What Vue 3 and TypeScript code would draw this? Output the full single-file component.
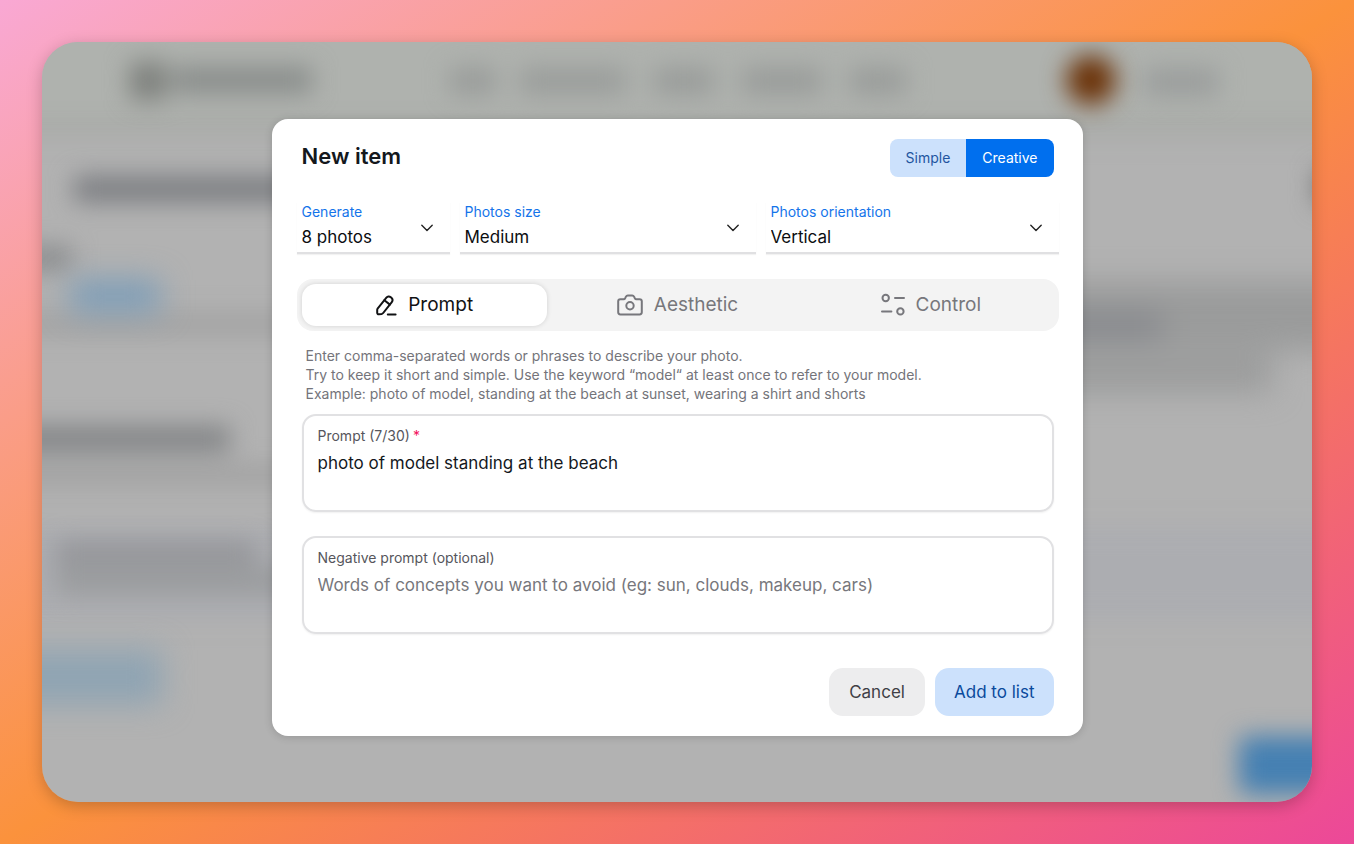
<script setup lang="ts">
import { ref } from 'vue'

interface SelectField {
  id: string
  label: string
  value: string
  options: string[]
}

const modes = ['Simple', 'Creative']
const mode = ref('Creative')

const fields = ref<SelectField[]>([
  { id: 'generate', label: 'Generate', value: '8 photos', options: ['4 photos', '8 photos', '16 photos'] },
  { id: 'size', label: 'Photos size', value: 'Medium', options: ['Small', 'Medium', 'Large'] },
  { id: 'orientation', label: 'Photos orientation', value: 'Vertical', options: ['Vertical', 'Horizontal', 'Square'] },
])

const tabs = ['Prompt', 'Aesthetic', 'Control']
const activeTab = ref('Prompt')

const prompt = ref('photo of model standing at the beach')
const negativePrompt = ref('')
</script>

<template>
  <div class="page">
    <div class="window">
      <svg class="backdrop" viewBox="0 0 1270 760" preserveAspectRatio="none" aria-hidden="true">
        <defs>
          <filter id="soft" filterUnits="userSpaceOnUse" x="-100" y="-100" width="1470" height="960" color-interpolation-filters="sRGB"><feGaussianBlur stdDeviation="12" /></filter>
          <filter id="softer" filterUnits="userSpaceOnUse" x="-100" y="-100" width="1470" height="960" color-interpolation-filters="sRGB"><feGaussianBlur stdDeviation="15" /></filter>
        </defs>
        <rect width="1270" height="760" fill="#b2b2b2" />
        <g filter="url(#soft)">
          <rect x="-60" y="-60" width="1390" height="152" fill="#afb2ae" />
          <rect x="-60" y="76" width="1390" height="18" fill="#a8aaa7" />
          <rect x="-60" y="485" width="1390" height="92" fill="#acadb1" />
        </g>
        <g filter="url(#soft)">
          <rect x="88" y="20" width="36" height="38" fill="#7d807c" />
          <rect x="130" y="25" width="140" height="26" fill="#888c8a" />
          <rect x="408" y="26" width="46" height="26" fill="#989b99" />
          <rect x="478" y="26" width="106" height="26" fill="#999c9a" />
          <rect x="612" y="26" width="60" height="26" fill="#989b99" />
          <rect x="700" y="26" width="80" height="26" fill="#989b99" />
          <rect x="808" y="26" width="56" height="26" fill="#989b99" />
          <rect x="1102" y="26" width="74" height="28" fill="#9a9d9c" />
          <rect x="32" y="134" width="240" height="26" fill="#7b7d81" />
          <rect x="-40" y="204" width="70" height="24" fill="#8a8c8e" />
          <rect x="-40" y="272" width="310" height="20" fill="#a1a1a1" />
          <rect x="-40" y="384" width="228" height="26" fill="#828486" />
          <rect x="-40" y="424" width="310" height="18" fill="#9f9f9f" />
          <rect x="14" y="500" width="200" height="22" fill="#929397" />
          <rect x="14" y="526" width="256" height="26" fill="#999b9d" />
        </g>
        <g filter="url(#softer)">
          <rect x="28" y="238" width="90" height="32" fill="#7c9db8" />
          <rect x="1000" y="240" width="330" height="68" fill="#9a9b9b" />
          <rect x="1000" y="272" width="120" height="24" fill="#84868b" />
          <rect x="1000" y="312" width="230" height="38" fill="#9b9c9c" />
          <rect x="-60" y="608" width="180" height="54" fill="#8fa4b3" />
        </g>
        <g filter="url(#soft)">
          <circle cx="1049" cy="38" r="25" fill="#6b3208" />
          <rect x="1197" y="694" width="140" height="58" rx="8" fill="#4580b2" />
          <rect x="1274" y="128" width="20" height="34" fill="#707070" />
        </g>
      </svg>

      <form class="modal" role="dialog" aria-labelledby="dialog-title" @submit.prevent>
        <header class="head">
          <h1 id="dialog-title">New item</h1>
          <div class="modes" role="group" aria-label="Mode">
            <button
              v-for="name in modes"
              :key="name"
              type="button"
              :class="{ on: mode === name }"
              :aria-pressed="mode === name"
              @click="mode = name"
            >{{ name }}</button>
          </div>
        </header>

        <div class="fields">
          <div v-for="field in fields" :key="field.id" class="field">
            <label :for="field.id">{{ field.label }}</label>
            <select :id="field.id" v-model="field.value">
              <option v-for="option in field.options" :key="option">{{ option }}</option>
            </select>
            <svg class="chevron" viewBox="0 0 14 14" aria-hidden="true"><path d="M1.8 4.3 7 9.5l5.2-5.2" /></svg>
          </div>
        </div>

        <div class="tabs" role="tablist">
          <button
            v-for="tab in tabs"
            :key="tab"
            type="button"
            role="tab"
            :aria-selected="activeTab === tab"
            :class="{ active: activeTab === tab }"
            @click="activeTab = tab"
          >
            <svg v-if="tab === 'Prompt'" class="pencil" viewBox="0 0 22 24" aria-hidden="true">
              <path d="M2.6 15.6 11.4 4.7c1.2-1.5 2.9-1.7 4.4-.5l.6.5c1.5 1.2 1.6 2.9.4 4.4L8.2 20c-.4.5-.9.8-1.5.9l-2.8.4c-1 .1-1.7-.5-1.7-1.5V17c0-.6.1-1 .4-1.4Z" />
              <path d="m9.4 7.2 5.5 4.4M12.8 21.5h7.8" />
            </svg>
            <svg v-else-if="tab === 'Aesthetic'" class="camera" viewBox="0 0 26 22" aria-hidden="true">
              <path d="M3.4 5.2h3.2c.8 0 1.2-.3 1.6-1l.6-1.3c.4-.8 1-1.4 2-1.4h4.4c1 0 1.6.6 2 1.4l.6 1.3c.4.7.8 1 1.6 1h3.2c1.3 0 2.2.9 2.2 2.1v11c0 1.3-.9 2.1-2.2 2.1H3.4c-1.3 0-2.2-.8-2.2-2.1v-11c0-1.2.9-2.1 2.2-2.1Z" />
              <circle cx="13" cy="11.8" r="3.7" />
            </svg>
            <svg v-else class="sliders" viewBox="0 0 24 24" aria-hidden="true">
              <circle cx="4.7" cy="5" r="3.2" />
              <path d="M14 5h9M1 18.4h9.4" />
              <circle cx="19.4" cy="18.4" r="3.2" />
            </svg>
            <span>{{ tab }}</span>
          </button>
        </div>

        <p class="hint">
          Enter comma-separated words or phrases to describe your photo.<br />
          Try to keep it short and simple. Use the keyword “model“ at least once to refer to your model.<br />
          Example: photo of model, standing at the beach at sunset, wearing a shirt and shorts
        </p>

        <div class="box">
          <label for="prompt">Prompt (7/30)<span class="star">*</span></label>
          <textarea id="prompt" v-model="prompt" spellcheck="false" required></textarea>
        </div>
        <div class="box">
          <label for="negative">Negative prompt (optional)</label>
          <textarea
            id="negative"
            v-model="negativePrompt"
            placeholder="Words of concepts you want to avoid (eg: sun, clouds, makeup, cars)"
          ></textarea>
        </div>

        <footer class="actions">
          <button type="button" class="cancel">Cancel</button>
          <button type="submit" class="add">Add to list</button>
        </footer>
      </form>
    </div>
  </div>
</template>

<style>
body {
  margin: 0;
}
</style>

<style scoped>
* {
  box-sizing: border-box;
}

.page {
  min-height: 100vh;
  padding: 42px;
  display: flex;
  font-family: Inter, "Liberation Sans", sans-serif;
  background: linear-gradient(to bottom right, #f9a8d4, #fb923c, #ec4899);
}

.window {
  position: relative;
  flex: 1;
  display: flex;
  justify-content: center;
  align-items: center;
  padding: 30px 24px 20px;
  border-radius: 36px;
  overflow: hidden;
  box-shadow: 0 4px 16px rgba(0, 0, 0, 0.22);
}

.backdrop {
  position: absolute;
  inset: 0;
  width: 100%;
  height: 100%;
}

.modal {
  position: relative;
  width: 100%;
  max-width: 811px;
  padding: 20px 24px 20px 25px;
  border-radius: 16px;
  background: #fff;
  box-shadow: 0 1px 8px rgba(0, 0, 0, 0.16);
}

button,
select,
textarea {
  font-family: inherit;
  border: 0;
  margin: 0;
  padding: 0;
}

button {
  cursor: pointer;
}

.head {
  display: flex;
  justify-content: space-between;
  align-items: flex-start;
  padding: 0 5px;
}

h1 {
  margin: 0;
  font-size: 22px;
  line-height: 34px;
  font-weight: 600;
  color: #14181d;
}

.modes {
  display: flex;
  height: 38px;
  border-radius: 8px;
  overflow: hidden;
}

.modes button {
  padding: 0 16px;
  font-size: 14px;
  color: #1f55a0;
  background: #cce1fc;
}

.modes .on {
  color: #fff;
  background: #006fee;
}

.fields {
  display: grid;
  grid-template-columns: 153fr 296fr 293fr;
  gap: 10px;
  margin-top: 25px;
}

.field {
  position: relative;
  display: flex;
  flex-direction: column;
  border-bottom: 2px solid #e0e0e2;
  box-shadow: 0 1px 1px rgba(0, 0, 0, 0.05);
}

.field label {
  padding-left: 5px;
  font-size: 14px;
  line-height: 20px;
  color: #1474ea;
}

.field select {
  height: 30px;
  padding-left: 5px;
  appearance: none;
  background: transparent;
  font-size: 17px;
  color: #0c0d10;
}

.chevron {
  position: absolute;
  top: 19px;
  right: 16px;
  width: 14px;
  height: 14px;
  fill: none;
  stroke: #222;
  stroke-width: 1.4;
  stroke-linecap: round;
  stroke-linejoin: round;
  pointer-events: none;
}

.tabs {
  display: grid;
  grid-template-columns: repeat(3, 1fr);
  gap: 8px;
  margin-top: 25px;
  padding: 5px;
  border-radius: 16px;
  background: #f3f3f3;
}

.tabs button {
  display: flex;
  align-items: center;
  justify-content: center;
  gap: 11px;
  height: 42px;
  border-radius: 14px;
  background: transparent;
  font-size: 19px;
  color: #77777c;
}

.tabs .active {
  color: #111214;
  background: #fff;
  box-shadow: 0 0 5px rgba(0, 0, 0, 0.14);
}

.tabs svg {
  flex: none;
  fill: none;
  stroke: currentColor;
  stroke-width: 2;
  stroke-linecap: round;
  stroke-linejoin: round;
}

.pencil {
  width: 22px;
  height: 24px;
}

.camera {
  width: 26px;
  height: 22px;
}

.sliders {
  width: 24px;
  height: 24px;
}

.hint {
  margin: 15px 9px 11px;
  font-size: 14px;
  line-height: 19px;
  color: #74747a;
}

.box {
  display: flex;
  flex-direction: column;
  gap: 5px;
  height: 98px;
  margin: 0 5px;
  padding: 10px 14px 6px;
  border: 2px solid #e1e1e3;
  border-radius: 14px;
  box-shadow: 0 1px 2px rgba(0, 0, 0, 0.06);
}

.box + .box {
  margin-top: 24px;
}

.box label {
  font-size: 14px;
  line-height: 20px;
  color: #56565c;
}

.star {
  margin-left: 3px;
  color: #f31260;
}

.box textarea {
  flex: 1;
  resize: none;
  outline: 0;
  background: transparent;
  font-size: 17px;
  line-height: 24px;
  color: #14181d;
}

.box textarea::placeholder {
  color: #77777c;
}

.actions {
  display: flex;
  justify-content: flex-end;
  gap: 10px;
  margin-top: 34px;
  padding: 0 5px;
}

.actions button {
  height: 48px;
  min-width: 96px;
  padding: 0 19px;
  border-radius: 14px;
  font-size: 17px;
}

.cancel {
  color: #3f3f46;
  background: #ededee;
}

.add {
  color: #0a4a9c;
  background: #cce1fc;
}
</style>
